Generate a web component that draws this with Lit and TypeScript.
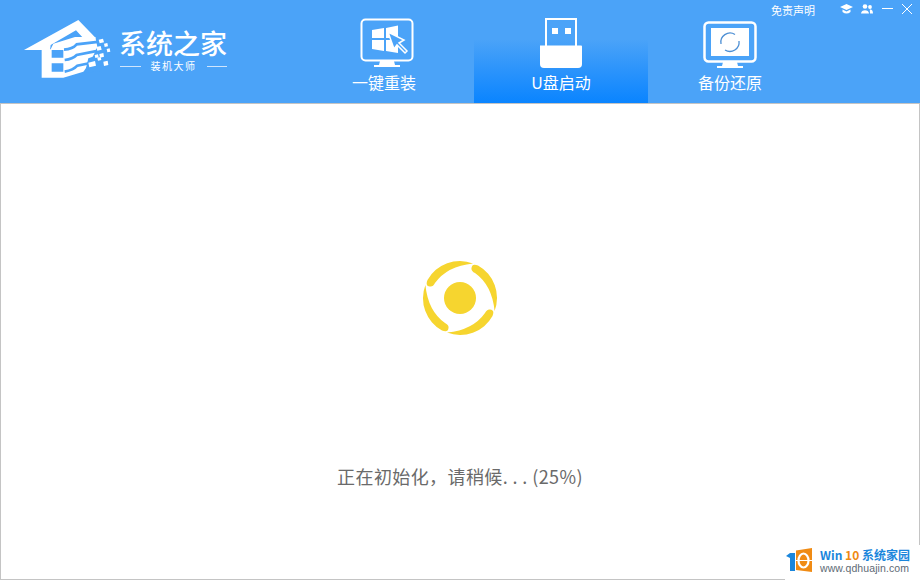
import { LitElement, html, css, svg } from "lit";
import { customElement } from "lit/decorators.js";

const crescent = svg`<path d="M51 3.400 A37 37 0 0 0 5.500 20 Q3 26 8 26.500 Q11 27 13 23 Q25 6 51 3.400 Z"/>`;

@customElement("app-root")
export class AppRoot extends LitElement {
  static styles = css`
    :host { display: block; width: 920px; height: 580px; overflow: hidden; position: relative; font-family: "Microsoft YaHei", "Noto Sans CJK SC", sans-serif; }
    .win { width: 920px; height: 580px; display: flex; flex-direction: column; }
    .top { height: 103px; background: #4ba3f8; display: flex; position: relative; flex: none; }
    .logo { width: 302px; position: relative; flex: none; }
    .logo svg { position: absolute; left: 20px; top: 15px; }
    .brand { position: absolute; left: 119px; top: 27px; font-size: 27px; line-height: 32px; font-weight: 500; color: #fff; white-space: nowrap; }
    .sub { position: absolute; left: 120px; top: 59px; width: 107px; display: flex; align-items: center; gap: 10px; color: #fff; font-size: 10px; line-height: 14px; white-space: nowrap; justify-content: center; letter-spacing: 1.5px; }
    .sub i { height: 1px; flex: 1; background: #cfe5fd; }
    .tabs { display: flex; }
    .tab { width: 164px; height: 103px; display: flex; flex-direction: column; align-items: center; color: #fff; font-size: 16px; position: relative; }
    .tab.first { margin-right: 8px; }
    .tab.on { background: linear-gradient(#4ba3f8 0%, #4ba3f8 38%, #0a84ff 100%); width: 174px; }
    .tab svg { display: block; position: absolute; }
    .tab span { position: absolute; top: 70px; line-height: 24px; white-space: nowrap; }
    .ctl { position: absolute; right: 0; top: 0; height: 20px; width: 160px; }
    .ctl .d { position: absolute; left: 11px; top: 2px; font-size: 11px; line-height: 16px; color: #fff; white-space: nowrap; }
    .ctl svg { position: absolute; }
    .body { flex: 1; background: #fff; border: 1px solid #c4c4c4; display: flex; flex-direction: column; align-items: center; position: relative; }
    .spin { margin-top: 156px; display: block; }
    .msg { margin-top: 127px; font-size: 18px; line-height: 26px; color: #6a6a6a; white-space: pre; letter-spacing: .4px; }
    .wm { position: absolute; left: 785px; top: 545px; width: 135px; height: 35px; background: #fff; }
    .wm .a { position: absolute; left: 35px; top: 2px; font: 700 12px/16px "Noto Sans CJK SC", "Liberation Sans", sans-serif; color: #1a86dc; white-space: nowrap; }
    .wm .a b { color: #ef8a12; font-weight: 700; }
    .wm .b { position: absolute; left: 35px; top: 16px; font: 10.5px/14px "Liberation Sans", sans-serif; color: #5e6a75; letter-spacing: .1px; white-space: nowrap; }
  `;

  render() {
    return html`<div class="win">
      <div class="top">
        <div class="logo">
          <svg width="100" height="70" viewBox="0 0 300 210">
            <path fill="#fff" d="M12 105 L175 15 L228 70 L190 70 L168 46 L92 90 L90 105 Z"/>
            <path fill="#fff" d="M65 103 H92 L100 86 L165 66 H226 L232 95 L222 118 L205 150 L190 170 L130 188 H65 Z"/>
            <path fill="none" stroke="#4ba3f8" stroke-width="8" d="M132 104 Q158 102 170 88 L240 80 M134 135 Q158 132 170 120 L240 106 M134 170 Q160 165 172 152 L240 138"/>
            <path fill="#4ba3f8" d="M95 105h35v23H95z M95 145h35v25H95z"/>
            <path fill="#4ba3f8" d="M205 130 L240 118 L240 170 L195 172 Z"/>
            <path fill="#fff" d="M236 74l13-3 3 11-13 3z M252 86l10-2 2 10-10 2z M229 96l13-3 3 11-13 3z M260 102l9-2 2 10-9 2z M238 117l12-3 2 11-12 3z M224 120l10-2 2 9-10 2z M205 143l20-5 3 14-20 5z M232 128l10-2 2 9-10 2z M250 140l13-3 2 13-13 3z"/>
          </svg>
          <div class="brand">系统之家</div>
          <div class="sub"><i></i>装机大师<i></i></div>
        </div>
        <div class="tabs">
          <div class="tab first">
            <svg style="left:58px;top:18px" width="54" height="50" viewBox="0 0 54 50">
              <rect x="1.500" y="1.500" width="51" height="41" rx="4" fill="none" stroke="#fff" stroke-width="2"/>
              <path fill="#fff" d="M20 43h14l1 4h5v2H14v-2h5z"/>
              <path fill="#fff" d="M12 12 24 10V20H12z M26 10 38 7.500V20H26z M12 22H24V33L12 31z M26 22H38V35L26 33z"/>
              <path d="M28 14 L34 31 L37 27 L45 35 L47 33 L39 25 L44 22 Z" fill="#4ba3f8" stroke="#fff" stroke-width="1.500"/>
            </svg>
            <span>一键重装</span>
          </div>
          <div class="tab on">
            <svg style="left:65px;top:18px" width="44" height="50" viewBox="0 0 44 50">
              <path fill="none" stroke="#fff" stroke-width="2" d="M7 1h30v30H7z"/>
              <path fill="#fff" d="M13 10h6v6h-6z M26 10h6v6h-6z"/>
              <path fill="#fff" d="M1 27.500h41c.500 0 1 .500 1 1V46q0 4-4 4H5q-4 0-4-4z"/>
            </svg>
            <span>U盘启动</span>
          </div>
          <div class="tab">
            <svg style="left:55px;top:21px" width="54" height="48" viewBox="0 0 54 48">
              <rect x="1.500" y="1.500" width="51" height="39" rx="4" fill="none" stroke="#fff" stroke-width="2.500"/>
              <rect x="8" y="7" width="38" height="28" fill="#fff"/>
              <path fill="#fff" d="M20 41h14l1 4h5v2H14v-2h5z"/>
              <path d="M18 23 A9.200 9.200 0 0 1 32 13.500 M36 20 A9.200 9.200 0 0 1 22 29" fill="none" stroke="#4d8fd4" stroke-width="1.300"/>
            </svg>
            <span>备份还原</span>
          </div>
        </div>
        <div class="ctl">
          <div class="d">免责声明</div>
          <svg style="left:80px;top:4px" width="13" height="10" viewBox="0 0 13 10"><path fill="#fff" d="M6.500 0 13 3 6.500 6 0 3z M2.500 5.500l4 2 4-2V8Q6.500 11 2.500 8z"/></svg>
          <svg style="left:101px;top:4px" width="12" height="10" viewBox="0 0 12 10"><circle cx="4" cy="2.500" r="2.300" fill="#fff"/><circle cx="9" cy="3" r="1.900" fill="#fff"/><path fill="#fff" d="M0 9.500c0-4.500 8-4.500 8 0z M8.800 5.500c1.700-.500 3.200.800 3.200 4H9z"/></svg>
          <svg style="left:122px;top:8px" width="12" height="2"><rect width="11" height="1" fill="#fff"/></svg>
          <svg style="left:141px;top:3px" width="12" height="12" viewBox="0 0 12 12"><path d="M1 1 11 11 M11 1 1 11" stroke="#fff" stroke-width="1" fill="none"/></svg>
        </div>
      </div>
      <div class="body">
        <svg class="spin" width="76" height="76" viewBox="0 0 76 76" fill="#f6d52f">
          <circle cx="38" cy="38" r="16"/>
          ${crescent}
          <g transform="rotate(90 38 38)">${crescent}</g>
          <g transform="rotate(180 38 38)">${crescent}</g>
          <g transform="rotate(270 38 38)">${crescent}</g>
        </svg>
        <div class="msg">正在初始化，请稍候. . . (25%)</div>
      </div>
      <div class="wm">
        <svg style="position:absolute;left:0;top:2px" width="28" height="26" viewBox="0 0 28 26">
          <path fill="#f08b14" d="M11 3.500 27 1V25L11 23z"/>
          <path fill="#1a86dc" d="M1 9 5 6H10V24H5V11z"/>
          <path fill="#fff" d="M11 13h16v1H11z"/>
          <ellipse cx="18.500" cy="13.500" rx="5" ry="7" fill="none" stroke="#fff" stroke-width="2.200"/>
        </svg>
        <div class="a">Win <b>10</b> 系统家园</div>
        <div class="b">www.qdhuajin.com</div>
      </div>
    </div>`;
  }
}
